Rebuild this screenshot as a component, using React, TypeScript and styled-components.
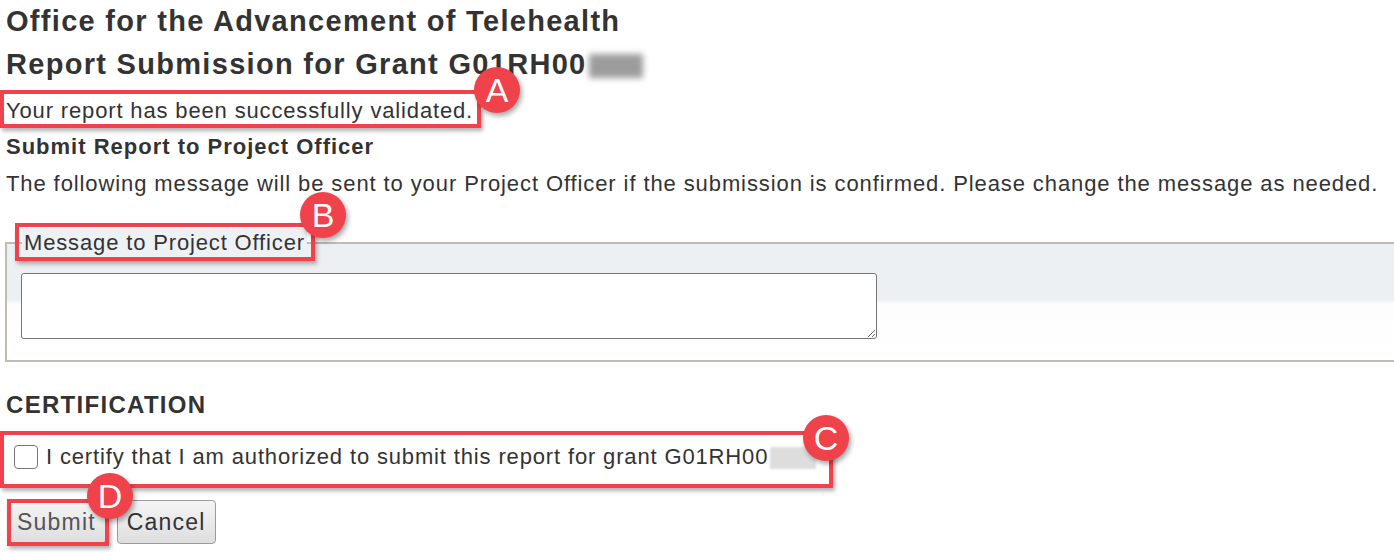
import styled, { createGlobalStyle } from "styled-components";
import { useState } from "react";

const GlobalStyle = createGlobalStyle`
  body {
    margin: 0;
    background: #fff;
    font-family: "Liberation Sans", Arial, sans-serif;
    color: #333;
  }
`;

// 注釈（赤枠とバッジ）の位置
const boxes = [
  { left: 0, top: 90, width: 481, height: 38 },
  { left: 15, top: 223, width: 300, height: 38 },
  { left: 0, top: 431, width: 833, height: 57 },
  { left: 7, top: 499, width: 102, height: 47 },
];

const badges = [
  { label: "A", x: 497, y: 90 },
  { label: "B", x: 323, y: 215 },
  { label: "C", x: 826, y: 438 },
  { label: "D", x: 110, y: 496 },
];

export default function App() {
  const [message, setMessage] = useState("");
  const [checked, setChecked] = useState(false);

  return (
    <Page>
      <GlobalStyle />
      <Title>
        Office for the Advancement of Telehealth
        <br />
        Report Submission for Grant G01RH00
        <Redacted $tone="dark" />
      </Title>
      <Status>Your report has been successfully validated.</Status>
      <SubHeading>Submit Report to Project Officer</SubHeading>
      <Text>
        The following message will be sent to your Project Officer if the submission is confirmed. Please change the
        message as needed.
      </Text>

      <Fieldset>
        <Legend>Message to Project Officer</Legend>
        <MessageBox value={message} onChange={(evt) => setMessage(evt.target.value)} />
      </Fieldset>

      <SectionTitle>CERTIFICATION</SectionTitle>
      <CertifyRow>
        <Check type="checkbox" checked={checked} onChange={() => setChecked(!checked)} />
        <span>
          I certify that I am authorized to submit this report for grant G01RH00
          <Redacted $tone="light" />
        </span>
      </CertifyRow>

      <Buttons>
        <Button type="button" $muted>
          Submit
        </Button>
        <Button type="button">Cancel</Button>
      </Buttons>

      {boxes.map((b, i) => (
        <Frame key={i} style={{ left: b.left, top: b.top, width: b.width, height: b.height }} />
      ))}
      {badges.map((b) => (
        <Badge key={b.label} style={{ left: b.x - 23, top: b.y - 23 }}>
          {b.label}
        </Badge>
      ))}
    </Page>
  );
}

// styled-components
const Page = styled.div`
  position: relative;
  padding: 0 6px;
  height: 552px;
  overflow: hidden;
`;

const Title = styled.h1`
  margin: 0;
  font-size: 29px;
  line-height: 43px;
  letter-spacing: 1.3px;
  font-weight: bold;
  white-space: nowrap;
`;

const Redacted = styled.span<{ $tone: "dark" | "light" }>`
  display: inline-block;
  vertical-align: middle;
  width: ${(p) => (p.$tone === "dark" ? "54px" : "46px")};
  height: ${(p) => (p.$tone === "dark" ? "24px" : "22px")};
  margin-left: 2px;
  background: ${(p) => (p.$tone === "dark" ? "#9c9c9c" : "#dddddd")};
  filter: blur(${(p) => (p.$tone === "dark" ? "3px" : "1px")});
`;

const Status = styled.p`
  margin: 10px 0 0;
  font-size: 22px;
  line-height: 30px;
  letter-spacing: 0.85px;
`;

const SubHeading = styled.h3`
  margin: 6px 0 0;
  font-size: 22px;
  line-height: 30px;
  letter-spacing: 1px;
  font-weight: bold;
`;

const Text = styled.p`
  margin: 7px 0 0;
  font-size: 22px;
  line-height: 30px;
  letter-spacing: 0.9px;
  white-space: nowrap;
`;

const Fieldset = styled.fieldset`
  margin: 29px -30px 0 -1px;
  padding: 0 13px 21px 14px;
  border: 2px solid #c0bcb2;
  background: linear-gradient(#edf0f3 0%, #edf0f3 48%, #fdfdfd 52%, #ffffff 100%);
`;

const Legend = styled.legend`
  padding: 0 2px;
  margin-left: 1px;
  font-size: 22px;
  line-height: 30px;
  letter-spacing: 0.85px;
  background: #eef1f4;
`;

const MessageBox = styled.textarea`
  display: block;
  margin-top: 15px;
  width: 856px;
  height: 66px;
  box-sizing: border-box;
  border: 1px solid #767676;
  border-radius: 3px;
  background: #fff;
  font-family: "Liberation Sans", Arial, sans-serif;
  font-size: 18px;
`;

const SectionTitle = styled.h3`
  margin: 28px 0 0;
  font-size: 24px;
  line-height: 30px;
  letter-spacing: 1.3px;
  font-weight: bold;
`;

const CertifyRow = styled.label`
  display: flex;
  align-items: center;
  gap: 8px;
  margin-top: 21px;
  padding-left: 8px;
  height: 32px;
  font-size: 22px;
  letter-spacing: 0.85px;
  white-space: nowrap;
`;

const Check = styled.input`
  appearance: none;
  margin: 0;
  width: 24px;
  height: 24px;
  flex-shrink: 0;
  border: 1.5px solid #767676;
  border-radius: 4px;
  background: #fff;
  &:checked {
    background: #0075ff;
    border-color: #0075ff;
  }
`;

const Buttons = styled.div`
  display: flex;
  gap: 11px;
  margin-top: 27px;
  padding-left: 1px;
`;

const Button = styled.button<{ $muted?: boolean }>`
  height: 44px;
  padding: 0 9px;
  border: 1.5px solid #9a9a9a;
  border-radius: 4px;
  background: linear-gradient(#f5f5f5, #dedede);
  color: ${(p) => (p.$muted ? "#555" : "#333")};
  font-family: "Liberation Sans", Arial, sans-serif;
  font-size: 23px;
  letter-spacing: 1.2px;
  cursor: pointer;
`;

const Frame = styled.div`
  position: absolute;
  box-sizing: border-box;
  border: 4px solid #f0424a;
  box-shadow: 2px 3px 4px rgba(0, 0, 0, 0.3);
  pointer-events: none;
`;

const Badge = styled.div`
  position: absolute;
  width: 46px;
  height: 46px;
  border-radius: 50%;
  background: #f0424a;
  color: #fff;
  display: flex;
  align-items: center;
  justify-content: center;
  font-size: 34px;
  line-height: 1;
  box-shadow: 2px 3px 5px rgba(0, 0, 0, 0.35);
  pointer-events: none;
`;
